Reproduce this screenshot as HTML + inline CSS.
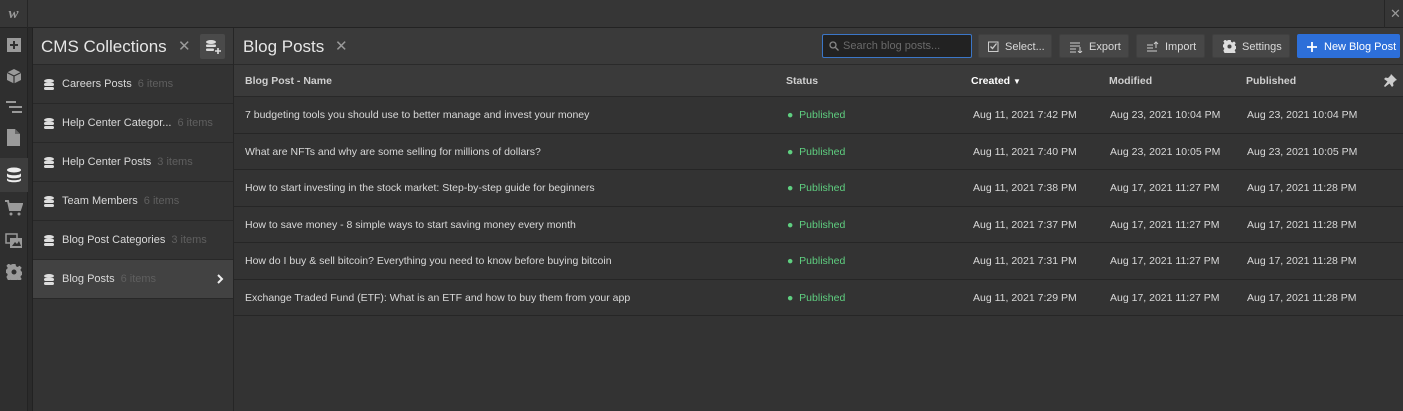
<!DOCTYPE html>
<html><head><meta charset="utf-8"><style>
*{box-sizing:border-box;margin:0;padding:0}
body{width:1403px;height:411px;background:#333;font-family:"Liberation Sans",sans-serif;color:#d9d9d9;position:relative;overflow:hidden;font-size:11px}
.a{position:absolute}
.top{left:0;top:0;width:1403px;height:28px;background:#363636;border-bottom:1px solid #232323}
.side{left:0;top:28px;width:28px;height:383px;background:#2f2f2f;border-right:1px solid #232323}
.strip{left:28px;top:28px;width:5px;height:383px;background:#2b2b2b;border-right:1px solid #222}
.panel{left:33px;top:28px;width:201px;height:383px;background:#333;border-right:1px solid #262626}
.ph{left:0;top:0;width:200px;height:37px;background:#3a3a3a;border-bottom:1px solid #282828}
.item{position:absolute;left:0;width:200px;height:39px;border-bottom:1px solid #282828;font-size:11px;color:#d9d9d9}
.item span.t{position:absolute;left:29px;top:13px}
.item .c{color:#5f5f5f;margin-left:6px}
.main{left:234px;top:28px;width:1169px;height:383px;background:#333}
.mh{left:0;top:0;width:1169px;height:37px;background:#3a3a3a;border-bottom:1px solid #2a2a2a}
.th{left:0;top:37px;width:1169px;height:32px;background:#3a3a3a;border-bottom:1px solid #282828;font-weight:bold;color:#cfcfcf;font-size:10.5px}
.row{position:absolute;left:0;width:1169px;height:36.5px;border-bottom:1px solid #262626;font-size:10.5px;color:#d9d9d9}
.row span,.th span{position:absolute;top:12px}
.th span{top:10px}
.btn{position:absolute;top:6px;height:24px;background:#474747;border-radius:2px;color:#d9d9d9;font-size:11px;line-height:24px;border:1px solid #404040}
.pub{color:#5fcf80}
</style></head><body>
<div class="a top">
  <div class="a" style="left:0;top:0;width:28px;height:28px;border-right:1px solid #262626;color:#9a9a9a;font-weight:bold;font-style:italic;font-size:15px;text-align:center;line-height:28px;font-family:'Liberation Serif',serif">w</div>
  <div class="a" style="left:1384px;top:0;width:1px;height:28px;background:#262626"></div>
  <div class="a" style="left:1390px;top:6px;color:#9a9a9a;font-size:13px">✕</div>
</div>
<div class="a side">
  <svg class="a" style="left:6px;top:9px" width="16" height="16"><rect width="14" height="14" x="1" y="1" fill="#9a9a9a"/><path d="M8 4v8M4 8h8" stroke="#2f2f2f" stroke-width="2"/></svg>
  <svg class="a" style="left:6px;top:40px" width="16" height="16"><path d="M8 1L15 4.5V12L8 15.5L1 12V4.5Z" fill="#9a9a9a"/><path d="M1 4.5L8 8L15 4.5M8 8V15.5" stroke="#2f2f2f" stroke-width="1.2" fill="none"/></svg>
  <svg class="a" style="left:6px;top:72px" width="16" height="14"><rect x="0" y="1" width="10" height="2" fill="#9a9a9a"/><rect x="3" y="6" width="13" height="2" fill="#9a9a9a"/><rect x="6" y="11" width="10" height="2" fill="#9a9a9a"/></svg>
  <svg class="a" style="left:7px;top:101px" width="14" height="18"><path d="M0 0H8L13 5V17H0Z" fill="#9a9a9a"/><path d="M8 0V5H13" fill="#666"/></svg>
  <div class="a" style="left:0;top:130px;width:28px;height:34px;background:#3d3d3d"></div>
  <svg class="a" style="left:6px;top:139px" width="16" height="16"><ellipse cx="8" cy="3" rx="7" ry="2.5" fill="#eee"/><path d="M1 6c0 3 14 3 14 0v3c0 3-14 3-14 0z M1 11c0 3 14 3 14 0v2c0 3-14 3-14 0z" fill="#eee"/></svg>
  <svg class="a" style="left:5px;top:172px" width="18" height="16"><path d="M0 1H3L5 10H15L17 4H4" stroke="#9a9a9a" stroke-width="2" fill="none"/><rect x="4" y="4" width="12" height="6" fill="#9a9a9a"/><circle cx="6" cy="14" r="1.5" fill="#9a9a9a"/><circle cx="14" cy="14" r="1.5" fill="#9a9a9a"/></svg>
  <svg class="a" style="left:5px;top:205px" width="18" height="16"><rect x="1" y="1" width="11" height="9" fill="none" stroke="#9a9a9a" stroke-width="1.5"/><rect x="5" y="5" width="12" height="10" fill="#9a9a9a"/><path d="M7 13l3-4 2 2 2-3 2 5z" fill="#2f2f2f"/></svg>
  <svg class="a" style="left:6px;top:236px" width="16" height="16" viewBox="0 0 16 16"><path d="M6.5 0h3l.5 2.3 1.6.7 2-1.3 2.1 2.1-1.3 2 .7 1.6 2.3.5v3l-2.3.5-.7 1.6 1.3 2-2.1 2.1-2-1.3-1.6.7-.5 2.3h-3l-.5-2.3-1.6-.7-2 1.3L.4 12.9l1.3-2L1 9.3-1.3 8.8v-3l2.3-.5.7-1.6-1.3-2L2.5-.4l2 1.3L6 .3z" fill="#9a9a9a"/><circle cx="8" cy="8" r="2.5" fill="#2f2f2f"/></svg>
</div>
<div class="a strip"></div>
<div class="a panel">
  <div class="a ph">
    <div class="a" style="left:8px;top:9px;font-size:17px;color:#e6e6e6">CMS Collections</div>
    <div class="a" style="left:145px;top:9px;font-size:15px;color:#9a9a9a">✕</div>
    <div class="a" style="left:167px;top:6px;width:25px;height:25px;background:#4a4a4a;border-radius:2px"></div>
    <svg class="a" style="left:172px;top:12px" width="16" height="14"><ellipse cx="6" cy="2" rx="5" ry="2" fill="#ddd"/><rect x="1" y="4.5" width="10" height="2.5" rx="1" fill="#ddd"/><rect x="1" y="8.5" width="8" height="2.5" rx="1" fill="#ddd"/><path d="M13 8v6M10 11h6" stroke="#ddd" stroke-width="1.6"/></svg>
  </div>
  <div class="item" style="top:37px"><svg class="a" style="left:11px;top:14px" width="10" height="11"><ellipse cx="5" cy="2" rx="5" ry="2" fill="#ddd"/><rect y="4" width="10" height="3" rx="1.5" fill="#ddd"/><rect y="8" width="10" height="3" rx="1.5" fill="#ddd"/></svg><span class="t">Careers Posts<span class="c">6 items</span></span></div>
  <div class="item" style="top:76px"><svg class="a" style="left:11px;top:14px" width="10" height="11"><ellipse cx="5" cy="2" rx="5" ry="2" fill="#ddd"/><rect y="4" width="10" height="3" rx="1.5" fill="#ddd"/><rect y="8" width="10" height="3" rx="1.5" fill="#ddd"/></svg><span class="t">Help Center Categor...<span class="c">6 items</span></span></div>
  <div class="item" style="top:115px"><svg class="a" style="left:11px;top:14px" width="10" height="11"><ellipse cx="5" cy="2" rx="5" ry="2" fill="#ddd"/><rect y="4" width="10" height="3" rx="1.5" fill="#ddd"/><rect y="8" width="10" height="3" rx="1.5" fill="#ddd"/></svg><span class="t">Help Center Posts<span class="c">3 items</span></span></div>
  <div class="item" style="top:154px"><svg class="a" style="left:11px;top:14px" width="10" height="11"><ellipse cx="5" cy="2" rx="5" ry="2" fill="#ddd"/><rect y="4" width="10" height="3" rx="1.5" fill="#ddd"/><rect y="8" width="10" height="3" rx="1.5" fill="#ddd"/></svg><span class="t">Team Members<span class="c">6 items</span></span></div>
  <div class="item" style="top:193px"><svg class="a" style="left:11px;top:14px" width="10" height="11"><ellipse cx="5" cy="2" rx="5" ry="2" fill="#ddd"/><rect y="4" width="10" height="3" rx="1.5" fill="#ddd"/><rect y="8" width="10" height="3" rx="1.5" fill="#ddd"/></svg><span class="t">Blog Post Categories<span class="c">3 items</span></span></div>
  <div class="item" style="top:232px;background:#424242"><svg class="a" style="left:11px;top:14px" width="10" height="11"><ellipse cx="5" cy="2" rx="5" ry="2" fill="#ddd"/><rect y="4" width="10" height="3" rx="1.5" fill="#ddd"/><rect y="8" width="10" height="3" rx="1.5" fill="#ddd"/></svg><span class="t">Blog Posts<span class="c">6 items</span></span><svg class="a" style="left:184px;top:14px" width="7" height="10"><path d="M1 1l4 4-4 4" stroke="#eee" stroke-width="2" fill="none"/></svg></div>
</div>
<div class="a main">
  <div class="a mh">
    <div class="a" style="left:9px;top:9px;font-size:17px;color:#e6e6e6">Blog Posts</div>
    <div class="a" style="left:101px;top:9px;font-size:15px;color:#9a9a9a">✕</div>
    <div class="a" style="left:588px;top:6px;width:150px;height:24px;background:#222;border:1px solid #3b76c7;border-radius:2px;color:#6a6a6a;line-height:22px;padding-left:20px;font-size:11px">Search blog posts...
      <svg class="a" style="left:6px;top:6px" width="10" height="10"><circle cx="4" cy="4" r="3" stroke="#888" stroke-width="1.3" fill="none"/><path d="M6.5 6.5L9.5 9.5" stroke="#888" stroke-width="1.3"/></svg></div>
    <div class="btn" style="left:744px;width:74px;padding-left:26px">Select...<svg class="a" style="left:9px;top:6px" width="11" height="11"><rect x=".5" y="1" width="9.5" height="9.5" stroke="#ccc" fill="none"/><path d="M2.5 5.5l2 2 4-5" stroke="#ccc" stroke-width="1.3" fill="none"/></svg></div>
    <div class="btn" style="left:825px;width:70px;padding-left:29px">Export<svg class="a" style="left:10px;top:7px" width="13" height="11"><path d="M0 1h10M0 4h10M0 7h6M0 10h6" stroke="#ccc"/><path d="M10 5v6M8 9l2 2 2-2" stroke="#ccc" fill="none"/></svg></div>
    <div class="btn" style="left:902px;width:69px;padding-left:28px">Import<svg class="a" style="left:10px;top:6px" width="13" height="11"><path d="M0 4h6M0 7h6M0 10h10" stroke="#ccc"/><path d="M9 7V1M7 3l2-2 2 2" stroke="#ccc" fill="none"/></svg></div>
    <div class="btn" style="left:978px;width:78px;padding-left:29px">Settings<svg class="a" style="left:10px;top:5px" width="13" height="13" viewBox="0 0 16 16"><path d="M6.5 0h3l.5 2.3 1.6.7 2-1.3 2.1 2.1-1.3 2 .7 1.6 2.3.5v3l-2.3.5-.7 1.6 1.3 2-2.1 2.1-2-1.3-1.6.7-.5 2.3h-3l-.5-2.3-1.6-.7-2 1.3L.4 12.9l1.3-2L1 9.3-1.3 8.8v-3l2.3-.5.7-1.6-1.3-2L2.5-.4l2 1.3L6 .3z" fill="#ddd"/><circle cx="8" cy="8" r="2.5" fill="#474747"/></svg></div>
    <div class="btn" style="left:1063px;width:103px;background:#2d6fd9;border-color:#2d6fd9;color:#fff;padding-left:26px">New Blog Post<svg class="a" style="left:9px;top:7px" width="10" height="10"><path d="M5 0v10M0 5h10" stroke="#fff" stroke-width="1.8"/></svg></div>
  </div>
  <div class="a th">
    <span style="left:11px">Blog Post - Name</span>
    <span style="left:552px">Status</span>
    <span style="left:737px;color:#fff">Created <span style="position:static;font-size:8px">&#9660;</span></span>
    <span style="left:875px">Modified</span>
    <span style="left:1012px">Published</span>
    <svg class="a" style="left:1150px;top:9px" width="13" height="13" viewBox="0 0 13 13"><path d="M7 0l6 6-1.5.5L9 9l.5 2.5L8 13 5.5 9.5 1 13 0 12l3.5-4.5L0 5l1.5-1.5L4 4 6.5 1.5z" fill="#ccc"/></svg>
  </div>
  <div class="row" style="top:69px"><span style="left:11px">7 budgeting tools you should use to better manage and invest your money</span><span class="pub" style="left:553px">●&nbsp; Published</span><span style="left:739px">Aug 11, 2021 7:42 PM</span><span style="left:876px">Aug 23, 2021 10:04 PM</span><span style="left:1013px">Aug 23, 2021 10:04 PM</span></div>
  <div class="row" style="top:105.5px"><span style="left:11px">What are NFTs and why are some selling for millions of dollars?</span><span class="pub" style="left:553px">●&nbsp; Published</span><span style="left:739px">Aug 11, 2021 7:40 PM</span><span style="left:876px">Aug 23, 2021 10:05 PM</span><span style="left:1013px">Aug 23, 2021 10:05 PM</span></div>
  <div class="row" style="top:142px"><span style="left:11px">How to start investing in the stock market: Step-by-step guide for beginners</span><span class="pub" style="left:553px">●&nbsp; Published</span><span style="left:739px">Aug 11, 2021 7:38 PM</span><span style="left:876px">Aug 17, 2021 11:27 PM</span><span style="left:1013px">Aug 17, 2021 11:28 PM</span></div>
  <div class="row" style="top:178.5px"><span style="left:11px">How to save money - 8 simple ways to start saving money every month</span><span class="pub" style="left:553px">●&nbsp; Published</span><span style="left:739px">Aug 11, 2021 7:37 PM</span><span style="left:876px">Aug 17, 2021 11:27 PM</span><span style="left:1013px">Aug 17, 2021 11:28 PM</span></div>
  <div class="row" style="top:215px"><span style="left:11px">How do I buy &amp; sell bitcoin? Everything you need to know before buying bitcoin</span><span class="pub" style="left:553px">●&nbsp; Published</span><span style="left:739px">Aug 11, 2021 7:31 PM</span><span style="left:876px">Aug 17, 2021 11:27 PM</span><span style="left:1013px">Aug 17, 2021 11:28 PM</span></div>
  <div class="row" style="top:251.5px"><span style="left:11px">Exchange Traded Fund (ETF): What is an ETF and how to buy them from your app</span><span class="pub" style="left:553px">●&nbsp; Published</span><span style="left:739px">Aug 11, 2021 7:29 PM</span><span style="left:876px">Aug 17, 2021 11:27 PM</span><span style="left:1013px">Aug 17, 2021 11:28 PM</span></div>
</div>
</body></html>
